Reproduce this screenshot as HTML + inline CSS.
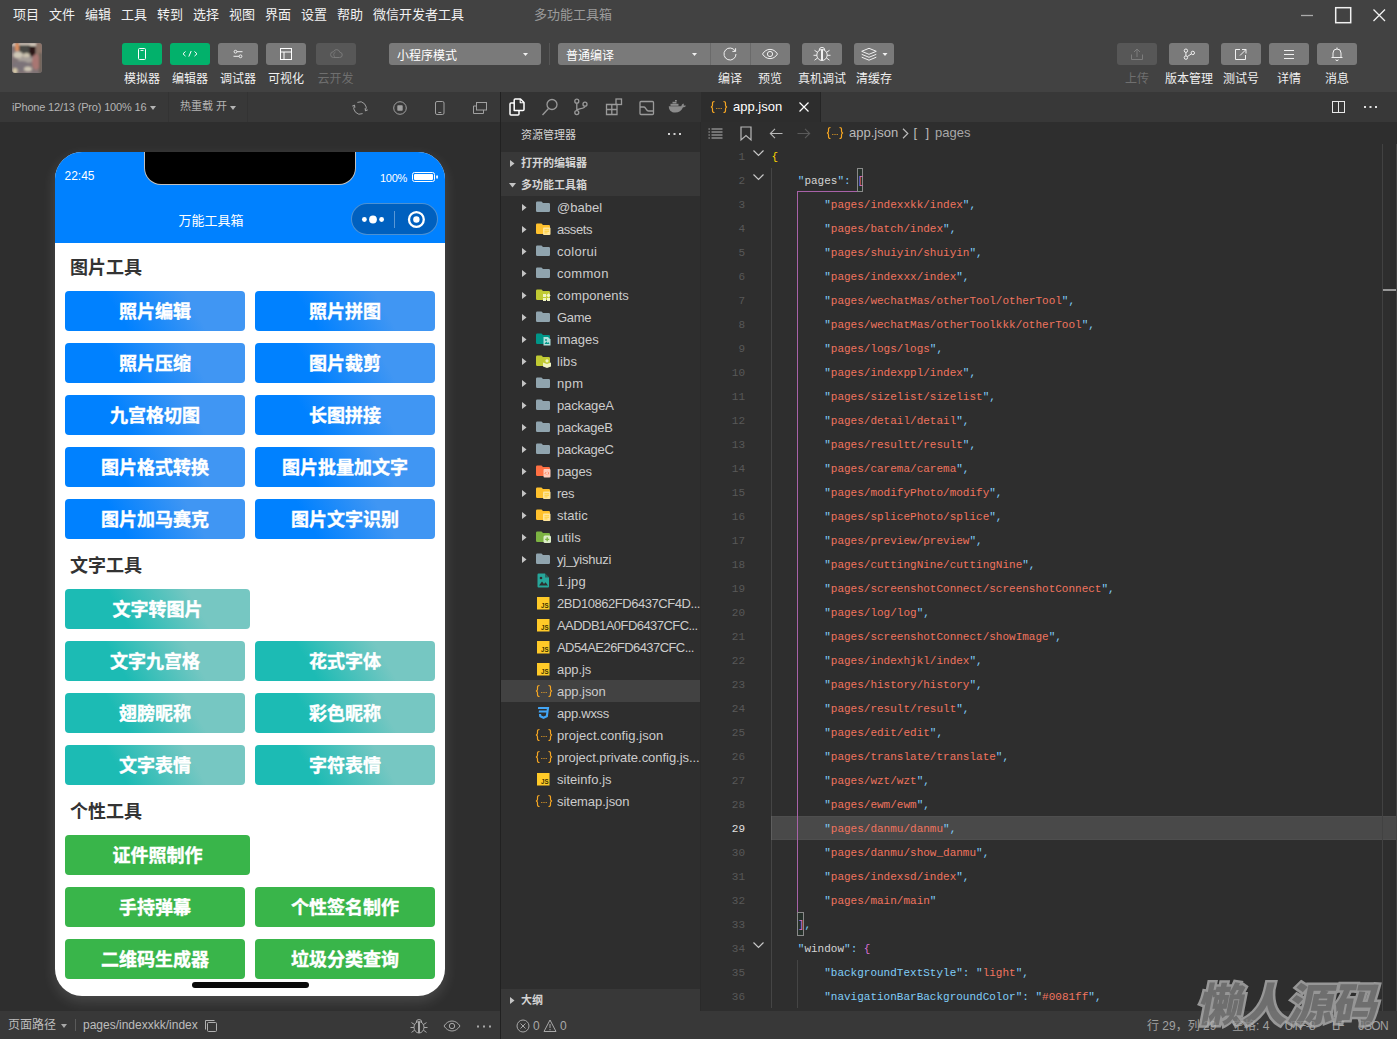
<!DOCTYPE html>
<html lang="zh-CN"><head><meta charset="utf-8"><title>微信开发者工具</title><style>
*{box-sizing:border-box;margin:0;padding:0}
html,body{width:1397px;height:1039px;overflow:hidden;background:#2e2e2e}
body{position:relative;font-family:"Liberation Sans","Noto Sans CJK SC",sans-serif;font-size:12px;color:#ccc;-webkit-font-smoothing:antialiased}
.abs{position:absolute}
.t{position:absolute;white-space:nowrap;line-height:1}
svg{position:absolute;overflow:visible}
#top{position:absolute;left:0;top:0;width:1397px;height:92px;background:#424242}
.mi{position:absolute;top:0;height:30px;line-height:30px;font-size:13px;color:#f2f2f2;white-space:nowrap}
.tb{position:absolute;top:43px;height:22px;width:40px;border-radius:3px;background:#7a7a7a}
.tb.g{background:#02b16b}
.tb.d{background:#575757}
.tl{position:absolute;top:72px;height:14px;line-height:14px;font-size:12px;color:#f0f0f0;white-space:nowrap;transform:translateX(-50%)}
.tl.d{color:#6f6f6f}
#simbar{position:absolute;left:0;top:92px;width:500px;height:30px;background:#383838}
#actbar{position:absolute;left:501px;top:92px;width:200px;height:30px;background:#333}
#tabbar{position:absolute;left:700px;top:92px;width:697px;height:30px;background:#383838}
#vdiv{position:absolute;left:500px;top:92px;width:1px;height:947px;background:#212121}
#sim{position:absolute;left:0;top:122px;width:500px;height:889px;background:#2e2e2e}
#simfoot{position:absolute;left:0;top:1011px;width:500px;height:28px;background:#383838}
#expl{position:absolute;left:501px;top:122px;width:199px;height:889px;background:#2e2e2e}
#status{position:absolute;left:501px;top:1011px;width:896px;height:28px;background:#383838}
#editor{position:absolute;left:700px;top:122px;width:697px;height:889px;background:#2e2e2e}

.ln{position:absolute;left:0;width:45px;height:24px;line-height:26px;text-align:right;font-family:"Liberation Mono",monospace;font-size:11px}
.cl{position:absolute;left:71.4px;height:24px;line-height:26px;white-space:pre;font-family:"Liberation Mono",monospace;font-size:11px;color:#d4d4d4}
#wm{position:absolute;left:1194px;top:969px;font-family:"Noto Sans CJK SC",sans-serif;font-weight:900;font-size:45px;line-height:66px;color:#7e7e7e;-webkit-text-stroke:5px #b0b0b0;paint-order:stroke fill;white-space:nowrap;letter-spacing:0;transform:skewX(-11deg);transform-origin:left bottom;opacity:.8}
</style></head>
<body>
<div id="top">
<span class="mi" style="left:13px">项目</span>
<span class="mi" style="left:49px">文件</span>
<span class="mi" style="left:85px">编辑</span>
<span class="mi" style="left:121px">工具</span>
<span class="mi" style="left:157px">转到</span>
<span class="mi" style="left:193px">选择</span>
<span class="mi" style="left:229px">视图</span>
<span class="mi" style="left:265px">界面</span>
<span class="mi" style="left:301px">设置</span>
<span class="mi" style="left:337px">帮助</span>
<span class="mi" style="left:373px">微信开发者工具</span>
<span class="mi" style="left:534px;color:#9b9b9b">多功能工具箱</span>
<svg style="left:1295px;top:0" width="102" height="30" viewBox="0 0 102 30" fill="none" stroke="#f0f0f0" stroke-width="1.3"><path d="M6 15.5h12" stroke="#aaa"/><rect x="40.7" y="7.7" width="15" height="15" stroke-width="1.5"/><path d="M78.5 9.5l11.5 11.5M90 9.5L78.5 21"/></svg>
<svg style="left:12px;top:43px" width="30" height="30" viewBox="0 0 30 30"><defs><clipPath id="avc"><rect width="30" height="30" rx="3"/></clipPath><filter id="avb" x="-20%" y="-20%" width="140%" height="140%"><feGaussianBlur stdDeviation="1"/></filter></defs><g clip-path="url(#avc)"><rect width="30" height="30" fill="#7f7375"/><g filter="url(#avb)"><rect x="0" y="0" width="30" height="3" fill="#d9cfc0"/><rect x="3" y="0" width="4" height="8" fill="#d98e5e"/><rect x="7" y="2" width="11" height="9" fill="#4a4a44"/><rect x="17.5" y="3" width="6" height="10" fill="#2a1418"/><rect x="24" y="0" width="6" height="14" fill="#8e7468"/><ellipse cx="6" cy="12" rx="5" ry="3.5" fill="#cfc7b6"/><ellipse cx="14.5" cy="12.5" rx="3.5" ry="2.5" fill="#cdc4b0"/><ellipse cx="14" cy="17" rx="8" ry="3" fill="#a8a09a"/><ellipse cx="24" cy="19" rx="4" ry="8" fill="#a97672"/><ellipse cx="9" cy="23" rx="9" ry="5" fill="#7c7379"/><ellipse cx="16" cy="26" rx="4" ry="2.5" fill="#cfc6b4"/><ellipse cx="3" cy="28" rx="2.5" ry="3" fill="#d5c9a8"/><rect x="27" y="10" width="3" height="20" fill="#6d6258"/></g></g></svg>
<div class="tb g" style="left:122px;width:40px;"><svg width="40" height="22" viewBox="0 0 40 22" fill="none" stroke="#fff" stroke-width="1"><rect x="16.5" y="5.5" width="7" height="11" rx="1"/><path d="M18.5 7.5h3" stroke-width="0.9"/></svg></div>
<div class="tb g" style="left:170px;width:40px;"><svg width="40" height="22" viewBox="0 0 40 22" fill="none" stroke="#fff" stroke-width="1"><path d="M15.5 8.5l-2.5 2.3 2.5 2.3M24.5 8.5l2.5 2.3-2.5 2.3M21.2 8l-2.4 5.6"/></svg></div>
<div class="tb " style="left:218px;width:40px;"><svg width="40" height="22" viewBox="0 0 40 22" fill="none" stroke="#f0f0f0" stroke-width="1"><circle cx="17.5" cy="8.7" r="1.4"/><path d="M19 8.7h5.5M15.5 13.3h5.5"/><circle cx="22.5" cy="13.3" r="1.4"/></svg></div>
<div class="tb " style="left:266px;width:40px;"><svg width="40" height="22" viewBox="0 0 40 22" fill="none" stroke="#fff" stroke-width="1"><rect x="14.5" y="5.5" width="11" height="11"/><path d="M14.5 9h11M18 9v7.5"/></svg></div>
<div class="tb d" style="left:316px;width:40px;"><svg width="40" height="22" viewBox="0 0 40 22" fill="none" stroke="#7a7a7a" stroke-width="1"><path d="M17.5 14.5h6a2.6 2.6 0 0 0 0.3-5.2 3.3 3.3 0 0 0-6.3-0.6 2.9 2.9 0 0 0 0 5.8z"/><path d="M19.5 14.5a3 3 0 0 1 0-5.5" stroke-width="0.8"/></svg></div>
<span class="tl " style="left:142px">模拟器</span>
<span class="tl " style="left:190px">编辑器</span>
<span class="tl " style="left:238px">调试器</span>
<span class="tl " style="left:286px">可视化</span>
<span class="tl d" style="left:335.5px">云开发</span>
<div class="tb" style="left:389px;width:152px"><span class="t" style="left:8px;top:6.5px;font-size:12px;color:#fff">小程序模式</span><svg style="left:134px;top:9.5px" width="5" height="3" viewBox="0 0 5 3"><path d="M0 0h5L2.5 3z" fill="#f0f0f0"/></svg></div>
<div class="abs" style="left:549px;top:43px;width:1px;height:22px;background:#555"></div>
<div class="tb" style="left:558px;width:232px"><span class="t" style="left:8px;top:6.5px;font-size:12px;color:#fff">普通编译</span><svg style="left:134px;top:9.5px" width="5" height="3" viewBox="0 0 5 3"><path d="M0 0h5L2.5 3z" fill="#f0f0f0"/></svg><div class="abs" style="left:152px;top:0;width:1px;height:22px;background:#6a6a6a"></div><div class="abs" style="left:192px;top:0;width:1px;height:22px;background:#6a6a6a"></div><div class="abs" style="left:152px;top:0;width:40px;height:22px"><svg width="40" height="22" viewBox="0 0 40 22" fill="none" stroke="#f0f0f0" stroke-width="1"><path d="M25.3 8.2a6 6 0 1 0 0.7 2.8"/><path d="M22.4 8.4h3.2v-3.2"/></svg></div><div class="abs" style="left:192px;top:0;width:40px;height:22px"><svg width="40" height="22" viewBox="0 0 40 22" fill="none" stroke="#f0f0f0" stroke-width="1"><path d="M12.5 11c2-3.2 4.6-4.6 7.5-4.6s5.5 1.4 7.5 4.6c-2 3.2-4.6 4.6-7.5 4.6s-5.5-1.4-7.5-4.6z"/><circle cx="20" cy="11" r="2.6"/></svg></div></div>
<div class="tb " style="left:802px;width:40px;"><svg width="40" height="22" viewBox="0 0 40 22" fill="none" stroke="#f0f0f0" stroke-width="1"><ellipse cx="20" cy="12" rx="5.2" ry="5.5"/><path d="M19.5 6.7v10.8M20.5 6.7v10.8M17.2 7.2a2.8 2.8 0 0 1 5.6 0M15.5 9.3l-3-2M24.5 9.3l3-2M14.8 12.3h-3.3M25.2 12.3h3.3M15.5 15l-3 2.2M24.5 15l3 2.2"/></svg></div>
<div class="tb " style="left:854px;width:40px;"><svg width="40" height="22" viewBox="0 0 40 22" fill="none" stroke="#f0f0f0" stroke-width="1" stroke-linejoin="round"><path d="M15 5.3l7.3 3-7.3 3-7.3-3z"/><path d="M7.7 11.3l7.3 3 7.3-3M7.7 14.2l7.3 3 7.3-3"/><path d="M28.5 10h5l-2.5 3z" fill="#f0f0f0" stroke="none"/></svg></div>
<span class="tl" style="left:730px">编译</span>
<span class="tl" style="left:770px">预览</span>
<span class="tl" style="left:822px">真机调试</span>
<span class="tl" style="left:874px">清缓存</span>
<div class="tb d" style="left:1117px;width:40px;"><svg width="40" height="22" viewBox="0 0 40 22" fill="none" stroke="#7c7c7c" stroke-width="1"><path d="M14.5 11.5v5h11v-5M20 14V6M17 9l3-3 3 3"/></svg></div>
<div class="tb " style="left:1169px;width:40px;"><svg width="40" height="22" viewBox="0 0 40 22" fill="none" stroke="#f0f0f0" stroke-width="1"><circle cx="16.9" cy="7.7" r="1.7"/><circle cx="16.9" cy="14.6" r="1.7"/><circle cx="23.8" cy="9.9" r="1.7"/><path d="M16.9 9.4v3.5M18.3 13.6l4.1-2.7"/></svg></div>
<div class="tb " style="left:1221px;width:40px;"><svg width="40" height="22" viewBox="0 0 40 22" fill="none" stroke="#f0f0f0" stroke-width="1"><path d="M19 6.5h-4.5v10h10v-4.5M21 6.5h4v4M25 6.5l-6 6"/></svg></div>
<div class="tb " style="left:1269px;width:40px;"><svg width="40" height="22" viewBox="0 0 40 22" fill="none" stroke="#f0f0f0" stroke-width="1"><path d="M15 7.5h10M15 11.5h10M15 15.5h10"/></svg></div>
<div class="tb " style="left:1317px;width:40px;"><svg width="40" height="22" viewBox="0 0 40 22" fill="none" stroke="#f0f0f0" stroke-width="1"><path d="M14.5 14.5h11M16 14.5v-4.5a4 4 0 0 1 8 0v4.5M20 6v-1.5M18.8 16.5a1.2 1.2 0 0 0 2.4 0"/></svg></div>
<span class="tl d" style="left:1137px">上传</span>
<span class="tl " style="left:1189px">版本管理</span>
<span class="tl " style="left:1241px">测试号</span>
<span class="tl " style="left:1289px">详情</span>
<span class="tl " style="left:1337px">消息</span>
</div>
<div id="simbar">
<span class="t" style="left:12px;top:9.5px;font-size:11px;color:#b4b4b4;letter-spacing:-.17px">iPhone 12/13 (Pro) 100% 16</span>
<svg style="left:150px;top:14px" width="6" height="4" viewBox="0 0 6 4"><path d="M0 0h6L3 4z" fill="#b4b4b4"/></svg>
<div class="abs" style="left:168px;top:0;width:1px;height:30px;background:#333"></div>
<span class="t" style="left:180px;top:9px;font-size:11px;color:#b4b4b4">热重载 开</span>
<svg style="left:230px;top:14px" width="6" height="4" viewBox="0 0 6 4"><path d="M0 0h6L3 4z" fill="#b4b4b4"/></svg>
<div class="abs" style="left:247px;top:0;width:1px;height:30px;background:#333"></div>
<svg style="left:352px;top:8px" width="16" height="16" viewBox="0 0 16 16" fill="none" stroke="#a0a0a0" stroke-width="1"><path d="M5.38 2.38A6.2 6.2 0 0 1 13.47 10.91M10.62 13.62A6.2 6.2 0 0 1 2.53 5.09"/><path d="M15.85 9.85L13.47 10.91L13.02 8.35M0.15 6.15L2.53 5.09L2.98 7.65" stroke-width="0.9"/></svg>
<svg style="left:392px;top:8px" width="16" height="16" viewBox="0 0 16 16" fill="none" stroke="#a0a0a0" stroke-width="1"><circle cx="8" cy="8" r="6.3"/><rect x="5.3" y="5.3" width="5.4" height="5.4" rx="0.8" fill="#a0a0a0" stroke="none"/></svg>
<svg style="left:432px;top:8px" width="16" height="16" viewBox="0 0 16 16" fill="none" stroke="#a0a0a0" stroke-width="1"><rect x="3.5" y="1.5" width="8.5" height="13" rx="1.5"/><path d="M6.3 12.5h3"/></svg>
<svg style="left:472px;top:8px" width="16" height="16" viewBox="0 0 16 16" fill="none" stroke="#a0a0a0" stroke-width="1"><rect x="4.5" y="2.5" width="10" height="7.5"/><path d="M4.5 6h-3v7.5h10v-3.5"/></svg>
</div>
<div id="sim">
<div id="phone" style="position:absolute;left:55px;top:30px;width:390px;height:844px;border-radius:27px;background:#fff;overflow:hidden;box-shadow:0 5px 14px rgba(255,255,255,.14)">
<div class="abs" style="left:0;top:0;width:390px;height:91px;background:#0081ff"></div>
<div class="abs" style="left:89px;top:-2px;width:212px;height:34.5px;background:#000;border-radius:0 0 17px 17px;border:1px solid rgba(255,255,255,.75);border-top:none"></div>
<span class="t" style="left:9.5px;top:18px;font-size:12px;color:#fff">22:45</span>
<span class="t" style="left:325px;top:20.5px;font-size:11px;color:#fff;letter-spacing:-.3px">100%</span>
<svg style="left:357px;top:20px" width="27" height="10" viewBox="0 0 27 10"><rect x="0.5" y="0.5" width="22" height="9" rx="2" fill="none" stroke="#fff" stroke-width="1"/><rect x="2" y="2" width="19" height="6" rx="1" fill="#fff"/><rect x="24.2" y="3.3" width="1.7" height="3.4" rx="0.85" fill="#fff"/></svg>
<span class="t" style="left:0;width:312px;text-align:center;top:62px;font-size:13px;color:#fff">万能工具箱</span>
<div class="abs" style="left:296px;top:51px;width:87px;height:32px;border-radius:16px;background:rgba(0,0,0,.25);border:1px solid rgba(255,255,255,.3)"></div>
<svg style="left:296px;top:51px" width="87" height="32" viewBox="0 0 87 32"><circle cx="13.4" cy="16.5" r="2.4" fill="#fff"/><circle cx="22" cy="16.5" r="3.9" fill="#fff"/><circle cx="30.6" cy="16.5" r="2.4" fill="#fff"/><path d="M43.5 8v17" stroke="rgba(255,255,255,.35)" stroke-width="1"/><circle cx="65.4" cy="16.5" r="7.4" fill="none" stroke="#fff" stroke-width="2.3"/><circle cx="65.4" cy="16.5" r="3.2" fill="#fff"/></svg>
<span class="t" style="left:15px;top:104px;height:24px;line-height:24px;font-size:18px;font-weight:bold;color:#333">图片工具</span>
<div class="abs" style="left:10px;top:139px;width:180px;height:40px;border-radius:4px;background:linear-gradient(60deg,#0081ff 31%,#4096f3 70%);color:#fff;font-size:18px;font-weight:bold;text-align:center;line-height:43px;white-space:nowrap;-webkit-text-stroke:.4px #fff">照片编辑</div>
<div class="abs" style="left:200px;top:139px;width:180px;height:40px;border-radius:4px;background:linear-gradient(60deg,#0081ff 31%,#4096f3 70%);color:#fff;font-size:18px;font-weight:bold;text-align:center;line-height:43px;white-space:nowrap;-webkit-text-stroke:.4px #fff">照片拼图</div>
<div class="abs" style="left:10px;top:191px;width:180px;height:40px;border-radius:4px;background:linear-gradient(60deg,#0081ff 31%,#4096f3 70%);color:#fff;font-size:18px;font-weight:bold;text-align:center;line-height:43px;white-space:nowrap;-webkit-text-stroke:.4px #fff">照片压缩</div>
<div class="abs" style="left:200px;top:191px;width:180px;height:40px;border-radius:4px;background:linear-gradient(60deg,#0081ff 31%,#4096f3 70%);color:#fff;font-size:18px;font-weight:bold;text-align:center;line-height:43px;white-space:nowrap;-webkit-text-stroke:.4px #fff">图片裁剪</div>
<div class="abs" style="left:10px;top:243px;width:180px;height:40px;border-radius:4px;background:linear-gradient(60deg,#0081ff 31%,#4096f3 70%);color:#fff;font-size:18px;font-weight:bold;text-align:center;line-height:43px;white-space:nowrap;-webkit-text-stroke:.4px #fff">九宫格切图</div>
<div class="abs" style="left:200px;top:243px;width:180px;height:40px;border-radius:4px;background:linear-gradient(60deg,#0081ff 31%,#4096f3 70%);color:#fff;font-size:18px;font-weight:bold;text-align:center;line-height:43px;white-space:nowrap;-webkit-text-stroke:.4px #fff">长图拼接</div>
<div class="abs" style="left:10px;top:295px;width:180px;height:40px;border-radius:4px;background:linear-gradient(60deg,#0081ff 31%,#4096f3 70%);color:#fff;font-size:18px;font-weight:bold;text-align:center;line-height:43px;white-space:nowrap;-webkit-text-stroke:.4px #fff">图片格式转换</div>
<div class="abs" style="left:200px;top:295px;width:180px;height:40px;border-radius:4px;background:linear-gradient(60deg,#0081ff 31%,#4096f3 70%);color:#fff;font-size:18px;font-weight:bold;text-align:center;line-height:43px;white-space:nowrap;-webkit-text-stroke:.4px #fff">图片批量加文字</div>
<div class="abs" style="left:10px;top:347px;width:180px;height:40px;border-radius:4px;background:linear-gradient(60deg,#0081ff 31%,#4096f3 70%);color:#fff;font-size:18px;font-weight:bold;text-align:center;line-height:43px;white-space:nowrap;-webkit-text-stroke:.4px #fff">图片加马赛克</div>
<div class="abs" style="left:200px;top:347px;width:180px;height:40px;border-radius:4px;background:linear-gradient(60deg,#0081ff 31%,#4096f3 70%);color:#fff;font-size:18px;font-weight:bold;text-align:center;line-height:43px;white-space:nowrap;-webkit-text-stroke:.4px #fff">图片文字识别</div>
<span class="t" style="left:15px;top:402px;height:24px;line-height:24px;font-size:18px;font-weight:bold;color:#333">文字工具</span>
<div class="abs" style="left:10px;top:437px;width:185px;height:40px;border-radius:4px;background:linear-gradient(60deg,#1cbbb4 31%,#76c7c2 70%);color:#fff;font-size:18px;font-weight:bold;text-align:center;line-height:43px;white-space:nowrap;-webkit-text-stroke:.4px #fff">文字转图片</div>
<div class="abs" style="left:10px;top:489px;width:180px;height:40px;border-radius:4px;background:linear-gradient(60deg,#1cbbb4 31%,#76c7c2 70%);color:#fff;font-size:18px;font-weight:bold;text-align:center;line-height:43px;white-space:nowrap;-webkit-text-stroke:.4px #fff">文字九宫格</div>
<div class="abs" style="left:200px;top:489px;width:180px;height:40px;border-radius:4px;background:linear-gradient(60deg,#1cbbb4 31%,#76c7c2 70%);color:#fff;font-size:18px;font-weight:bold;text-align:center;line-height:43px;white-space:nowrap;-webkit-text-stroke:.4px #fff">花式字体</div>
<div class="abs" style="left:10px;top:541px;width:180px;height:40px;border-radius:4px;background:linear-gradient(60deg,#1cbbb4 31%,#76c7c2 70%);color:#fff;font-size:18px;font-weight:bold;text-align:center;line-height:43px;white-space:nowrap;-webkit-text-stroke:.4px #fff">翅膀昵称</div>
<div class="abs" style="left:200px;top:541px;width:180px;height:40px;border-radius:4px;background:linear-gradient(60deg,#1cbbb4 31%,#76c7c2 70%);color:#fff;font-size:18px;font-weight:bold;text-align:center;line-height:43px;white-space:nowrap;-webkit-text-stroke:.4px #fff">彩色昵称</div>
<div class="abs" style="left:10px;top:593px;width:180px;height:40px;border-radius:4px;background:linear-gradient(60deg,#1cbbb4 31%,#76c7c2 70%);color:#fff;font-size:18px;font-weight:bold;text-align:center;line-height:43px;white-space:nowrap;-webkit-text-stroke:.4px #fff">文字表情</div>
<div class="abs" style="left:200px;top:593px;width:180px;height:40px;border-radius:4px;background:linear-gradient(60deg,#1cbbb4 31%,#76c7c2 70%);color:#fff;font-size:18px;font-weight:bold;text-align:center;line-height:43px;white-space:nowrap;-webkit-text-stroke:.4px #fff">字符表情</div>
<span class="t" style="left:15px;top:648px;height:24px;line-height:24px;font-size:18px;font-weight:bold;color:#333">个性工具</span>
<div class="abs" style="left:10px;top:683px;width:185px;height:40px;border-radius:4px;background:#39b54a;color:#fff;font-size:18px;font-weight:bold;text-align:center;line-height:43px;white-space:nowrap;-webkit-text-stroke:.4px #fff">证件照制作</div>
<div class="abs" style="left:10px;top:735px;width:180px;height:40px;border-radius:4px;background:#39b54a;color:#fff;font-size:18px;font-weight:bold;text-align:center;line-height:43px;white-space:nowrap;-webkit-text-stroke:.4px #fff">手持弹幕</div>
<div class="abs" style="left:200px;top:735px;width:180px;height:40px;border-radius:4px;background:#39b54a;color:#fff;font-size:18px;font-weight:bold;text-align:center;line-height:43px;white-space:nowrap;-webkit-text-stroke:.4px #fff">个性签名制作</div>
<div class="abs" style="left:10px;top:787px;width:180px;height:40px;border-radius:4px;background:#39b54a;color:#fff;font-size:18px;font-weight:bold;text-align:center;line-height:43px;white-space:nowrap;-webkit-text-stroke:.4px #fff">二维码生成器</div>
<div class="abs" style="left:200px;top:787px;width:180px;height:40px;border-radius:4px;background:#39b54a;color:#fff;font-size:18px;font-weight:bold;text-align:center;line-height:43px;white-space:nowrap;-webkit-text-stroke:.4px #fff">垃圾分类查询</div>
<div class="abs" style="left:137px;top:830px;width:117px;height:5.5px;border-radius:3px;background:#0a0a0a"></div>
</div>
</div>
<div id="simfoot">
<span class="t" style="left:8px;top:8px;font-size:12px;color:#bdbdbd">页面路径</span>
<svg style="left:61px;top:13px" width="6" height="4" viewBox="0 0 6 4"><path d="M0 0h6L3 4z" fill="#a8a8a8"/></svg>
<div class="abs" style="left:75px;top:8px;width:1px;height:12px;background:#5a5a5a"></div>
<span class="t" style="left:83px;top:8px;font-size:12px;color:#bdbdbd">pages/indexxkk/index</span>
<svg style="left:204px;top:8px" width="14" height="13" viewBox="0 0 14 13" fill="none" stroke="#b0b0b0" stroke-width="1"><path d="M1.5 10.5v-9h9"/><rect x="3.5" y="3.5" width="9" height="9" rx="1"/></svg>
<svg style="left:409px;top:6px" width="20" height="18" viewBox="0 0 20 18" fill="none" stroke="#a8a8a8" stroke-width="1"><ellipse cx="10" cy="10.3" rx="5" ry="5.7"/><path d="M9.5 4.8v11.2M10.5 4.8v11.2M7.2 5.3a2.8 2.8 0 0 1 5.6 0M5.6 7.6l-3.1-2M14.4 7.6l3.1-2M5 10.5h-3.5M15 10.5h3.5M5.6 13.2l-3.1 2.2M14.4 13.2l3.1 2.2"/></svg>
<svg style="left:443px;top:9px" width="18" height="12" viewBox="0 0 18 12" fill="none" stroke="#a8a8a8" stroke-width="1"><path d="M1 6c2.2-3.4 5-5 8-5s5.8 1.6 8 5c-2.2 3.4-5 5-8 5s-5.8-1.6-8-5z"/><circle cx="9" cy="6" r="2.7"/></svg>
<svg style="left:477px;top:13.5px" width="15" height="3" viewBox="0 0 15 3" fill="#a8a8a8"><rect x="0" y="0.5" width="2" height="2"/><rect x="6" y="0.5" width="2" height="2"/><rect x="12" y="0.5" width="2" height="2"/></svg>
</div>
<div id="actbar">
<svg style="left:8px;top:6px" width="16" height="18" viewBox="0 0 16 18" fill="none" stroke="#fff" stroke-width="1.5" stroke-linejoin="round"><path d="M5.2 12.5v-10.5a1 1 0 0 1 1-1h5.3l3.5 3.5v7a1 1 0 0 1-1 1z" fill="#333"/><path d="M11.2 1v3.8h3.8" stroke-width="1.1"/><path d="M5 5h-3a1 1 0 0 0-1 1v10a1 1 0 0 0 1 1h7a1 1 0 0 0 1-1v-3.3"/></svg>
<svg style="left:40px;top:6px" width="18" height="18" viewBox="0 0 18 18" fill="none" stroke="#9a9a9a" stroke-width="1.3"><circle cx="11" cy="6.5" r="5"/><path d="M7.5 10.5l-6 6.5"/></svg>
<svg style="left:72px;top:6px" width="16" height="18" viewBox="0 0 16 18" fill="none" stroke="#9a9a9a" stroke-width="1.3"><circle cx="3.8" cy="3.2" r="2"/><circle cx="3.8" cy="14.6" r="2"/><circle cx="12" cy="6.2" r="2"/><path d="M3.8 5.2v7.4M12 8.2c0 3-8 2-8.2 4.4"/></svg>
<svg style="left:104px;top:6px" width="18" height="18" viewBox="0 0 18 18" fill="none" stroke="#9a9a9a" stroke-width="1.3"><path d="M1.5 6.5h10.5v10h-10.5zM6.8 6.5v10M1.5 11.5h10.5"/><rect x="11" y="1" width="5.5" height="5.5"/></svg>
<svg style="left:138px;top:8px" width="16" height="16" viewBox="0 0 16 16" fill="none" stroke="#9a9a9a" stroke-width="1.3"><rect x="1" y="1.5" width="13.5" height="13" rx="1"/><path d="M1 7h4c2 0 2 4 4.5 4h5"/></svg>
<svg style="left:167px;top:8px" width="18" height="13" viewBox="0 0 18 13" fill="#8c8c8c"><path d="M0.8 6.2h12.5c0.4-1.6 1.6-2.3 2.2-2.6c0.3 0.6 0.5 1.4 0.3 2.1c0.8-0.3 1.6-0.2 2.1 0c-0.5 1-1.6 1.5-2.9 1.5c-1.3 3.4-4.2 5.3-7.8 5.3c-4 0-6.3-2.3-6.4-6.3z"/><rect x="2.5" y="3.8" width="8" height="2"/><rect x="4.5" y="1.8" width="4" height="1.7"/><rect x="7" y="0" width="1.8" height="1.5"/></svg>
</div>
<div id="expl">
<span class="t" style="left:20px;top:8px;font-size:11px;color:#d4d4d4">资源管理器</span>
<svg style="left:167px;top:11px" width="14" height="3" viewBox="0 0 14 3" fill="#d0d0d0"><rect x="0" y="0" width="2" height="2"/><rect x="5.5" y="0" width="2" height="2"/><rect x="11" y="0" width="2" height="2"/></svg>
<div class="abs" style="left:0;top:30px;width:199px;height:44px;background:#383838"></div>
<svg style="left:9px;top:37.5px" width="5" height="7" viewBox="0 0 5 7"><path d="M0 0l4.5 3.5L0 7z" fill="#c4c4c4"/></svg>
<span class="t" style="left:20px;top:36px;font-size:11px;font-weight:bold;color:#d4d4d4">打开的编辑器</span>
<svg style="left:7.5px;top:61px" width="7" height="5" viewBox="0 0 7 5"><path d="M0 0h7L3.5 4.5z" fill="#c4c4c4"/></svg>
<span class="t" style="left:20px;top:58px;font-size:11px;font-weight:bold;color:#d4d4d4">多功能工具箱</span>
<div class="abs" style="left:0;top:74px;width:199px;height:22px;">
<svg style="left:21.3px;top:7.5px" width="5" height="7" viewBox="0 0 5 7"><path d="M0 0l4.5 3.5L0 7z" fill="#c4c4c4"/></svg>
<svg width="16" height="14" viewBox="0 0 16 14" style="left:35px;top:4px"><path d="M1.2 1.5h4.3l1.5 1.5h5.8a1.2 1.2 0 0 1 1.2 1.2v6.6a1.2 1.2 0 0 1-1.2 1.2h-11.6a1.2 1.2 0 0 1-1.2-1.2v-8.1a1.2 1.2 0 0 1 1.2-1.2z" fill="#90a4ae"/></svg>
<span class="t" style="left:56px;top:3.5px;height:16px;line-height:16px;font-size:13px;color:#ccc;letter-spacing:0.031px">@babel</span></div>
<div class="abs" style="left:0;top:96px;width:199px;height:22px;">
<svg style="left:21.3px;top:7.5px" width="5" height="7" viewBox="0 0 5 7"><path d="M0 0l4.5 3.5L0 7z" fill="#c4c4c4"/></svg>
<svg width="16" height="14" viewBox="0 0 16 14" style="left:35px;top:4px"><path d="M1.2 1.5h4.3l1.5 1.5h5.8a1.2 1.2 0 0 1 1.2 1.2v6.6a1.2 1.2 0 0 1-1.2 1.2h-11.6a1.2 1.2 0 0 1-1.2-1.2v-8.1a1.2 1.2 0 0 1 1.2-1.2z" fill="#ffc12d"/><rect x="7" y="5.5" width="7.5" height="7.5" rx="1" fill="#ffe59a"/><path d="M8.5 7.7h4.5M8.5 9.3h4.5M8.5 10.9h3" stroke="#ffca28" stroke-width="0.8"/></svg>
<span class="t" style="left:56px;top:3.5px;height:16px;line-height:16px;font-size:13px;color:#ccc;letter-spacing:-0.43px">assets</span></div>
<div class="abs" style="left:0;top:118px;width:199px;height:22px;">
<svg style="left:21.3px;top:7.5px" width="5" height="7" viewBox="0 0 5 7"><path d="M0 0l4.5 3.5L0 7z" fill="#c4c4c4"/></svg>
<svg width="16" height="14" viewBox="0 0 16 14" style="left:35px;top:4px"><path d="M1.2 1.5h4.3l1.5 1.5h5.8a1.2 1.2 0 0 1 1.2 1.2v6.6a1.2 1.2 0 0 1-1.2 1.2h-11.6a1.2 1.2 0 0 1-1.2-1.2v-8.1a1.2 1.2 0 0 1 1.2-1.2z" fill="#90a4ae"/></svg>
<span class="t" style="left:56px;top:3.5px;height:16px;line-height:16px;font-size:13px;color:#ccc;letter-spacing:0.258px">colorui</span></div>
<div class="abs" style="left:0;top:140px;width:199px;height:22px;">
<svg style="left:21.3px;top:7.5px" width="5" height="7" viewBox="0 0 5 7"><path d="M0 0l4.5 3.5L0 7z" fill="#c4c4c4"/></svg>
<svg width="16" height="14" viewBox="0 0 16 14" style="left:35px;top:4px"><path d="M1.2 1.5h4.3l1.5 1.5h5.8a1.2 1.2 0 0 1 1.2 1.2v6.6a1.2 1.2 0 0 1-1.2 1.2h-11.6a1.2 1.2 0 0 1-1.2-1.2v-8.1a1.2 1.2 0 0 1 1.2-1.2z" fill="#90a4ae"/></svg>
<span class="t" style="left:56px;top:3.5px;height:16px;line-height:16px;font-size:13px;color:#ccc;letter-spacing:0.307px">common</span></div>
<div class="abs" style="left:0;top:162px;width:199px;height:22px;">
<svg style="left:21.3px;top:7.5px" width="5" height="7" viewBox="0 0 5 7"><path d="M0 0l4.5 3.5L0 7z" fill="#c4c4c4"/></svg>
<svg width="16" height="14" viewBox="0 0 16 14" style="left:35px;top:4px"><path d="M1.2 1.5h4.3l1.5 1.5h5.8a1.2 1.2 0 0 1 1.2 1.2v6.6a1.2 1.2 0 0 1-1.2 1.2h-11.6a1.2 1.2 0 0 1-1.2-1.2v-8.1a1.2 1.2 0 0 1 1.2-1.2z" fill="#c0ca33"/><rect x="7" y="6" width="3" height="3" fill="#f0f4c3"/><rect x="7" y="10" width="3" height="3" fill="#f0f4c3"/><rect x="11" y="10" width="3" height="3" fill="#f0f4c3"/><path d="M12.5 5.2l2.2 2.2-2.2 2.2-2.2-2.2z" fill="#f0f4c3"/></svg>
<span class="t" style="left:56px;top:3.5px;height:16px;line-height:16px;font-size:13px;color:#ccc;letter-spacing:0.117px">components</span></div>
<div class="abs" style="left:0;top:184px;width:199px;height:22px;">
<svg style="left:21.3px;top:7.5px" width="5" height="7" viewBox="0 0 5 7"><path d="M0 0l4.5 3.5L0 7z" fill="#c4c4c4"/></svg>
<svg width="16" height="14" viewBox="0 0 16 14" style="left:35px;top:4px"><path d="M1.2 1.5h4.3l1.5 1.5h5.8a1.2 1.2 0 0 1 1.2 1.2v6.6a1.2 1.2 0 0 1-1.2 1.2h-11.6a1.2 1.2 0 0 1-1.2-1.2v-8.1a1.2 1.2 0 0 1 1.2-1.2z" fill="#90a4ae"/></svg>
<span class="t" style="left:56px;top:3.5px;height:16px;line-height:16px;font-size:13px;color:#ccc;letter-spacing:-0.327px">Game</span></div>
<div class="abs" style="left:0;top:206px;width:199px;height:22px;">
<svg style="left:21.3px;top:7.5px" width="5" height="7" viewBox="0 0 5 7"><path d="M0 0l4.5 3.5L0 7z" fill="#c4c4c4"/></svg>
<svg width="16" height="14" viewBox="0 0 16 14" style="left:35px;top:4px"><path d="M1.2 1.5h4.3l1.5 1.5h5.8a1.2 1.2 0 0 1 1.2 1.2v6.6a1.2 1.2 0 0 1-1.2 1.2h-11.6a1.2 1.2 0 0 1-1.2-1.2v-8.1a1.2 1.2 0 0 1 1.2-1.2z" fill="#009688"/><path d="M7.5 5h4.5l2.5 2.5v6h-7z" fill="#b2dfdb"/><path d="M8.5 12l1.8-2.5 1.2 1.5 0.8-1 1.2 2z" fill="#009688"/><circle cx="10" cy="8" r="0.9" fill="#009688"/></svg>
<span class="t" style="left:56px;top:3.5px;height:16px;line-height:16px;font-size:13px;color:#ccc;letter-spacing:-0.054px">images</span></div>
<div class="abs" style="left:0;top:228px;width:199px;height:22px;">
<svg style="left:21.3px;top:7.5px" width="5" height="7" viewBox="0 0 5 7"><path d="M0 0l4.5 3.5L0 7z" fill="#c4c4c4"/></svg>
<svg width="16" height="14" viewBox="0 0 16 14" style="left:35px;top:4px"><path d="M1.2 1.5h4.3l1.5 1.5h5.8a1.2 1.2 0 0 1 1.2 1.2v6.6a1.2 1.2 0 0 1-1.2 1.2h-11.6a1.2 1.2 0 0 1-1.2-1.2v-8.1a1.2 1.2 0 0 1 1.2-1.2z" fill="#c0ca33"/><path d="M7 8.5l4 1.5 4-1.5v4l-4 1.5-4-1.5z" fill="#f0f4c3"/><circle cx="11" cy="6.8" r="1.6" fill="#f0f4c3"/></svg>
<span class="t" style="left:56px;top:3.5px;height:16px;line-height:16px;font-size:13px;color:#ccc;letter-spacing:0.146px">libs</span></div>
<div class="abs" style="left:0;top:250px;width:199px;height:22px;">
<svg style="left:21.3px;top:7.5px" width="5" height="7" viewBox="0 0 5 7"><path d="M0 0l4.5 3.5L0 7z" fill="#c4c4c4"/></svg>
<svg width="16" height="14" viewBox="0 0 16 14" style="left:35px;top:4px"><path d="M1.2 1.5h4.3l1.5 1.5h5.8a1.2 1.2 0 0 1 1.2 1.2v6.6a1.2 1.2 0 0 1-1.2 1.2h-11.6a1.2 1.2 0 0 1-1.2-1.2v-8.1a1.2 1.2 0 0 1 1.2-1.2z" fill="#90a4ae"/></svg>
<span class="t" style="left:56px;top:3.5px;height:16px;line-height:16px;font-size:13px;color:#ccc;letter-spacing:0.368px">npm</span></div>
<div class="abs" style="left:0;top:272px;width:199px;height:22px;">
<svg style="left:21.3px;top:7.5px" width="5" height="7" viewBox="0 0 5 7"><path d="M0 0l4.5 3.5L0 7z" fill="#c4c4c4"/></svg>
<svg width="16" height="14" viewBox="0 0 16 14" style="left:35px;top:4px"><path d="M1.2 1.5h4.3l1.5 1.5h5.8a1.2 1.2 0 0 1 1.2 1.2v6.6a1.2 1.2 0 0 1-1.2 1.2h-11.6a1.2 1.2 0 0 1-1.2-1.2v-8.1a1.2 1.2 0 0 1 1.2-1.2z" fill="#90a4ae"/></svg>
<span class="t" style="left:56px;top:3.5px;height:16px;line-height:16px;font-size:13px;color:#ccc;letter-spacing:-0.129px">packageA</span></div>
<div class="abs" style="left:0;top:294px;width:199px;height:22px;">
<svg style="left:21.3px;top:7.5px" width="5" height="7" viewBox="0 0 5 7"><path d="M0 0l4.5 3.5L0 7z" fill="#c4c4c4"/></svg>
<svg width="16" height="14" viewBox="0 0 16 14" style="left:35px;top:4px"><path d="M1.2 1.5h4.3l1.5 1.5h5.8a1.2 1.2 0 0 1 1.2 1.2v6.6a1.2 1.2 0 0 1-1.2 1.2h-11.6a1.2 1.2 0 0 1-1.2-1.2v-8.1a1.2 1.2 0 0 1 1.2-1.2z" fill="#90a4ae"/></svg>
<span class="t" style="left:56px;top:3.5px;height:16px;line-height:16px;font-size:13px;color:#ccc;letter-spacing:-0.279px">packageB</span></div>
<div class="abs" style="left:0;top:316px;width:199px;height:22px;">
<svg style="left:21.3px;top:7.5px" width="5" height="7" viewBox="0 0 5 7"><path d="M0 0l4.5 3.5L0 7z" fill="#c4c4c4"/></svg>
<svg width="16" height="14" viewBox="0 0 16 14" style="left:35px;top:4px"><path d="M1.2 1.5h4.3l1.5 1.5h5.8a1.2 1.2 0 0 1 1.2 1.2v6.6a1.2 1.2 0 0 1-1.2 1.2h-11.6a1.2 1.2 0 0 1-1.2-1.2v-8.1a1.2 1.2 0 0 1 1.2-1.2z" fill="#90a4ae"/></svg>
<span class="t" style="left:56px;top:3.5px;height:16px;line-height:16px;font-size:13px;color:#ccc;letter-spacing:-0.218px">packageC</span></div>
<div class="abs" style="left:0;top:338px;width:199px;height:22px;">
<svg style="left:21.3px;top:7.5px" width="5" height="7" viewBox="0 0 5 7"><path d="M0 0l4.5 3.5L0 7z" fill="#c4c4c4"/></svg>
<svg width="16" height="14" viewBox="0 0 16 14" style="left:35px;top:4px"><path d="M1.2 1.5h4.3l1.5 1.5h5.8a1.2 1.2 0 0 1 1.2 1.2v6.6a1.2 1.2 0 0 1-1.2 1.2h-11.6a1.2 1.2 0 0 1-1.2-1.2v-8.1a1.2 1.2 0 0 1 1.2-1.2z" fill="#ff7043"/><rect x="7.5" y="5" width="7" height="8.5" rx="1" fill="#ffccbc"/><path d="M10.3 8l-1.3 1.3 1.3 1.3M11.7 8l1.3 1.3-1.3 1.3" stroke="#ff7043" stroke-width="0.8" fill="none"/></svg>
<span class="t" style="left:56px;top:3.5px;height:16px;line-height:16px;font-size:13px;color:#ccc;letter-spacing:-0.084px">pages</span></div>
<div class="abs" style="left:0;top:360px;width:199px;height:22px;">
<svg style="left:21.3px;top:7.5px" width="5" height="7" viewBox="0 0 5 7"><path d="M0 0l4.5 3.5L0 7z" fill="#c4c4c4"/></svg>
<svg width="16" height="14" viewBox="0 0 16 14" style="left:35px;top:4px"><path d="M1.2 1.5h4.3l1.5 1.5h5.8a1.2 1.2 0 0 1 1.2 1.2v6.6a1.2 1.2 0 0 1-1.2 1.2h-11.6a1.2 1.2 0 0 1-1.2-1.2v-8.1a1.2 1.2 0 0 1 1.2-1.2z" fill="#ffc12d"/><rect x="7" y="5.5" width="7.5" height="7.5" rx="1" fill="#ffe59a"/><path d="M8.5 7.7h4.5M8.5 9.3h4.5M8.5 10.9h3" stroke="#ffca28" stroke-width="0.8"/></svg>
<span class="t" style="left:56px;top:3.5px;height:16px;line-height:16px;font-size:13px;color:#ccc;letter-spacing:-0.221px">res</span></div>
<div class="abs" style="left:0;top:382px;width:199px;height:22px;">
<svg style="left:21.3px;top:7.5px" width="5" height="7" viewBox="0 0 5 7"><path d="M0 0l4.5 3.5L0 7z" fill="#c4c4c4"/></svg>
<svg width="16" height="14" viewBox="0 0 16 14" style="left:35px;top:4px"><path d="M1.2 1.5h4.3l1.5 1.5h5.8a1.2 1.2 0 0 1 1.2 1.2v6.6a1.2 1.2 0 0 1-1.2 1.2h-11.6a1.2 1.2 0 0 1-1.2-1.2v-8.1a1.2 1.2 0 0 1 1.2-1.2z" fill="#ffc12d"/><rect x="7" y="5.5" width="7.5" height="7.5" rx="1" fill="#ffe59a"/><path d="M8.5 7.7h4.5M8.5 9.3h4.5M8.5 10.9h3" stroke="#ffca28" stroke-width="0.8"/></svg>
<span class="t" style="left:56px;top:3.5px;height:16px;line-height:16px;font-size:13px;color:#ccc;letter-spacing:0.076px">static</span></div>
<div class="abs" style="left:0;top:404px;width:199px;height:22px;">
<svg style="left:21.3px;top:7.5px" width="5" height="7" viewBox="0 0 5 7"><path d="M0 0l4.5 3.5L0 7z" fill="#c4c4c4"/></svg>
<svg width="16" height="14" viewBox="0 0 16 14" style="left:35px;top:4px"><path d="M1.2 1.5h4.3l1.5 1.5h5.8a1.2 1.2 0 0 1 1.2 1.2v6.6a1.2 1.2 0 0 1-1.2 1.2h-11.6a1.2 1.2 0 0 1-1.2-1.2v-8.1a1.2 1.2 0 0 1 1.2-1.2z" fill="#7cb342"/><rect x="7.5" y="5.5" width="7.5" height="7.5" rx="1.5" fill="#dcedc8"/><path d="M11.2 7.3v4M9.2 9.3h4" stroke="#7cb342" stroke-width="1.3"/></svg>
<span class="t" style="left:56px;top:3.5px;height:16px;line-height:16px;font-size:13px;color:#ccc;letter-spacing:0.175px">utils</span></div>
<div class="abs" style="left:0;top:426px;width:199px;height:22px;">
<svg style="left:21.3px;top:7.5px" width="5" height="7" viewBox="0 0 5 7"><path d="M0 0l4.5 3.5L0 7z" fill="#c4c4c4"/></svg>
<svg width="16" height="14" viewBox="0 0 16 14" style="left:35px;top:4px"><path d="M1.2 1.5h4.3l1.5 1.5h5.8a1.2 1.2 0 0 1 1.2 1.2v6.6a1.2 1.2 0 0 1-1.2 1.2h-11.6a1.2 1.2 0 0 1-1.2-1.2v-8.1a1.2 1.2 0 0 1 1.2-1.2z" fill="#90a4ae"/></svg>
<span class="t" style="left:56px;top:3.5px;height:16px;line-height:16px;font-size:13px;color:#ccc;letter-spacing:-0.226px">yj_yishuzi</span></div>
<div class="abs" style="left:0;top:448px;width:199px;height:22px;">
<svg width="13" height="15" viewBox="0 0 13 15" style="left:36px;top:3px"><path d="M1.5 0.5h6.5l4 4v9a1 1 0 0 1-1 1h-9.5a1 1 0 0 1-1-1v-12a1 1 0 0 1 1-1z" fill="#26a69a"/><path d="M8 0.5v4h4" fill="#2e2e2e" opacity="0.55"/><path d="M2 12.5l3-4 2 2.5 1.5-1.8 2.5 3.3z" fill="#2e2e2e"/><circle cx="4" cy="5" r="1.3" fill="#2e2e2e"/></svg>
<span class="t" style="left:56px;top:3.5px;height:16px;line-height:16px;font-size:13px;color:#ccc;letter-spacing:0.119px">1.jpg</span></div>
<div class="abs" style="left:0;top:470px;width:199px;height:22px;">
<svg width="13" height="13" viewBox="0 0 13 13" style="left:36px;top:5px"><rect width="12.5" height="12.5" fill="#ffca28"/><text x="4" y="11.3" font-family="Liberation Sans,sans-serif" font-size="6.5" font-weight="bold" fill="#3a3200" textLength="7.5" lengthAdjust="spacingAndGlyphs">JS</text></svg>
<span class="t" style="left:56px;top:3.5px;height:16px;line-height:16px;font-size:13px;color:#ccc;letter-spacing:-0.452px">2BD10862FD6437CF4D...</span></div>
<div class="abs" style="left:0;top:492px;width:199px;height:22px;">
<svg width="13" height="13" viewBox="0 0 13 13" style="left:36px;top:5px"><rect width="12.5" height="12.5" fill="#ffca28"/><text x="4" y="11.3" font-family="Liberation Sans,sans-serif" font-size="6.5" font-weight="bold" fill="#3a3200" textLength="7.5" lengthAdjust="spacingAndGlyphs">JS</text></svg>
<span class="t" style="left:56px;top:3.5px;height:16px;line-height:16px;font-size:13px;color:#ccc;letter-spacing:-0.552px">AADDB1A0FD6437CFC...</span></div>
<div class="abs" style="left:0;top:514px;width:199px;height:22px;">
<svg width="13" height="13" viewBox="0 0 13 13" style="left:36px;top:5px"><rect width="12.5" height="12.5" fill="#ffca28"/><text x="4" y="11.3" font-family="Liberation Sans,sans-serif" font-size="6.5" font-weight="bold" fill="#3a3200" textLength="7.5" lengthAdjust="spacingAndGlyphs">JS</text></svg>
<span class="t" style="left:56px;top:3.5px;height:16px;line-height:16px;font-size:13px;color:#ccc;letter-spacing:-0.566px">AD54AE26FD6437CFC...</span></div>
<div class="abs" style="left:0;top:536px;width:199px;height:22px;">
<svg width="13" height="13" viewBox="0 0 13 13" style="left:36px;top:5px"><rect width="12.5" height="12.5" fill="#ffca28"/><text x="4" y="11.3" font-family="Liberation Sans,sans-serif" font-size="6.5" font-weight="bold" fill="#3a3200" textLength="7.5" lengthAdjust="spacingAndGlyphs">JS</text></svg>
<span class="t" style="left:56px;top:3.5px;height:16px;line-height:16px;font-size:13px;color:#ccc;letter-spacing:-0.101px">app.js</span></div>
<div class="abs" style="left:0;top:558px;width:199px;height:22px;background:#424242;">
<svg width="18" height="14" viewBox="0 0 18 14" style="left:34px;top:4px" fill="none" stroke="#f5a623" stroke-width="1.2"><path d="M4.5 1.5c-1.5 0-2 0.5-2 1.8v2c0 0.9-0.5 1.5-1.5 1.7c1 0.2 1.5 0.8 1.5 1.7v2c0 1.3 0.5 1.8 2 1.8M13.5 1.5c1.5 0 2 0.5 2 1.8v2c0 0.9 0.5 1.5 1.5 1.7c-1 0.2-1.5 0.8-1.5 1.7v2c0 1.3-0.5 1.8-2 1.8"/><path d="M6.3 8.5h1M8.5 8.5h1M10.7 8.5h1" stroke-width="1.1"/></svg>
<span class="t" style="left:56px;top:3.5px;height:16px;line-height:16px;font-size:13px;color:#ccc;letter-spacing:-0.057px">app.json</span></div>
<div class="abs" style="left:0;top:580px;width:199px;height:22px;">
<svg width="14" height="14" viewBox="0 0 14 14" style="left:35px;top:4px"><path d="M2.2 1h11l-1.4 10-4.3 2-4.2-2-0.4-3h2.2l0.2 1.5 2.3 1 2.3-1 0.4-3h-7.6l0.3-2h7.6l0.2-1.5h-8.9z" fill="#42a5f5"/></svg>
<span class="t" style="left:56px;top:3.5px;height:16px;line-height:16px;font-size:13px;color:#ccc;letter-spacing:-0.263px">app.wxss</span></div>
<div class="abs" style="left:0;top:602px;width:199px;height:22px;">
<svg width="18" height="14" viewBox="0 0 18 14" style="left:34px;top:4px" fill="none" stroke="#f5a623" stroke-width="1.2"><path d="M4.5 1.5c-1.5 0-2 0.5-2 1.8v2c0 0.9-0.5 1.5-1.5 1.7c1 0.2 1.5 0.8 1.5 1.7v2c0 1.3 0.5 1.8 2 1.8M13.5 1.5c1.5 0 2 0.5 2 1.8v2c0 0.9 0.5 1.5 1.5 1.7c-1 0.2-1.5 0.8-1.5 1.7v2c0 1.3-0.5 1.8-2 1.8"/><path d="M6.3 8.5h1M8.5 8.5h1M10.7 8.5h1" stroke-width="1.1"/></svg>
<span class="t" style="left:56px;top:3.5px;height:16px;line-height:16px;font-size:13px;color:#ccc;letter-spacing:0.085px">project.config.json</span></div>
<div class="abs" style="left:0;top:624px;width:199px;height:22px;">
<svg width="18" height="14" viewBox="0 0 18 14" style="left:34px;top:4px" fill="none" stroke="#f5a623" stroke-width="1.2"><path d="M4.5 1.5c-1.5 0-2 0.5-2 1.8v2c0 0.9-0.5 1.5-1.5 1.7c1 0.2 1.5 0.8 1.5 1.7v2c0 1.3 0.5 1.8 2 1.8M13.5 1.5c1.5 0 2 0.5 2 1.8v2c0 0.9 0.5 1.5 1.5 1.7c-1 0.2-1.5 0.8-1.5 1.7v2c0 1.3-0.5 1.8-2 1.8"/><path d="M6.3 8.5h1M8.5 8.5h1M10.7 8.5h1" stroke-width="1.1"/></svg>
<span class="t" style="left:56px;top:3.5px;height:16px;line-height:16px;font-size:13px;color:#ccc;letter-spacing:-0.039px">project.private.config.js...</span></div>
<div class="abs" style="left:0;top:646px;width:199px;height:22px;">
<svg width="13" height="13" viewBox="0 0 13 13" style="left:36px;top:5px"><rect width="12.5" height="12.5" fill="#ffca28"/><text x="4" y="11.3" font-family="Liberation Sans,sans-serif" font-size="6.5" font-weight="bold" fill="#3a3200" textLength="7.5" lengthAdjust="spacingAndGlyphs">JS</text></svg>
<span class="t" style="left:56px;top:3.5px;height:16px;line-height:16px;font-size:13px;color:#ccc;letter-spacing:0.036px">siteinfo.js</span></div>
<div class="abs" style="left:0;top:668px;width:199px;height:22px;">
<svg width="18" height="14" viewBox="0 0 18 14" style="left:34px;top:4px" fill="none" stroke="#f5a623" stroke-width="1.2"><path d="M4.5 1.5c-1.5 0-2 0.5-2 1.8v2c0 0.9-0.5 1.5-1.5 1.7c1 0.2 1.5 0.8 1.5 1.7v2c0 1.3 0.5 1.8 2 1.8M13.5 1.5c1.5 0 2 0.5 2 1.8v2c0 0.9 0.5 1.5 1.5 1.7c-1 0.2-1.5 0.8-1.5 1.7v2c0 1.3-0.5 1.8-2 1.8"/><path d="M6.3 8.5h1M8.5 8.5h1M10.7 8.5h1" stroke-width="1.1"/></svg>
<span class="t" style="left:56px;top:3.5px;height:16px;line-height:16px;font-size:13px;color:#ccc;letter-spacing:-0.04px">sitemap.json</span></div>
<div class="abs" style="left:0;top:867px;width:199px;height:22px;background:#383838"></div>
<svg style="left:8.5px;top:874.5px" width="5" height="7" viewBox="0 0 5 7"><path d="M0 0l4.5 3.5L0 7z" fill="#c4c4c4"/></svg>
<span class="t" style="left:20px;top:873px;font-size:11px;font-weight:bold;color:#d4d4d4">大纲</span>
</div>
<div id="tabbar">
<div class="abs" style="left:0;top:0;width:1px;height:30px;background:#333"></div>
<div class="abs" style="left:1px;top:0;width:120px;height:30px;background:#2d2d2d;border-right:1px solid #252525"></div>
<svg width="18" height="14" viewBox="0 0 18 14" style="left:10px;top:8px" fill="none" stroke="#f5a623" stroke-width="1.2"><path d="M4.5 1.5c-1.5 0-2 0.5-2 1.8v2c0 0.9-0.5 1.5-1.5 1.7c1 0.2 1.5 0.8 1.5 1.7v2c0 1.3 0.5 1.8 2 1.8M13.5 1.5c1.5 0 2 0.5 2 1.8v2c0 0.9 0.5 1.5 1.5 1.7c-1 0.2-1.5 0.8-1.5 1.7v2c0 1.3-0.5 1.8-2 1.8"/><path d="M6.3 8.5h1M8.5 8.5h1M10.7 8.5h1" stroke-width="1.1"/></svg>
<span class="t" style="left:33px;top:7px;height:16px;line-height:16px;font-size:13px;color:#fff">app.json</span>
<svg style="left:99px;top:10px" width="10" height="10" viewBox="0 0 10 10" stroke="#fff" stroke-width="1.2"><path d="M0.5 0.5l9 9M9.5 0.5l-9 9"/></svg>
<svg style="left:632px;top:9px" width="13" height="12" viewBox="0 0 13 12" fill="none" stroke="#e8e8e8" stroke-width="1"><rect x="0.5" y="0.5" width="12" height="11"/><path d="M6.5 0.5v11"/></svg>
<svg style="left:664px;top:14px" width="14" height="3" viewBox="0 0 14 3" fill="#e0e0e0"><rect x="0" y="0" width="2" height="2"/><rect x="5.5" y="0" width="2" height="2"/><rect x="11" y="0" width="2" height="2"/></svg>
</div>
<div id="editor">
<div class="abs" style="left:0;top:0;width:1px;height:889px;background:#2a2a2a"></div>
<svg style="left:8px;top:6px" width="15" height="11" viewBox="0 0 15 11" fill="none" stroke="#b8b8b8" stroke-width="1"><path d="M0.5 1h1.3M3.5 1h11M0.5 4h1.3M3.5 4h11M0.5 7h1.3M3.5 7h11M0.5 10h1.3M3.5 10h11"/></svg>
<svg style="left:40px;top:4px" width="12" height="15" viewBox="0 0 12 15" fill="none" stroke="#b8b8b8" stroke-width="1.2"><path d="M1 1h10v13l-5-4.5-5 4.5z"/></svg>
<svg style="left:69px;top:6px" width="14" height="11" viewBox="0 0 14 11" fill="none" stroke="#b8b8b8" stroke-width="1.1"><path d="M13.5 5.5h-12M6 0.8l-4.7 4.7 4.7 4.7"/></svg>
<svg style="left:97px;top:6px" width="14" height="11" viewBox="0 0 14 11" fill="none" stroke="#5a5a5a" stroke-width="1.1"><path d="M0.5 5.5h12M8 0.8l4.7 4.7-4.7 4.7"/></svg>
<svg width="18" height="14" viewBox="0 0 18 14" style="left:126px;top:4px" fill="none" stroke="#f5a623" stroke-width="1.2"><path d="M4.5 1.5c-1.5 0-2 0.5-2 1.8v2c0 0.9-0.5 1.5-1.5 1.7c1 0.2 1.5 0.8 1.5 1.7v2c0 1.3 0.5 1.8 2 1.8M13.5 1.5c1.5 0 2 0.5 2 1.8v2c0 0.9 0.5 1.5 1.5 1.7c-1 0.2-1.5 0.8-1.5 1.7v2c0 1.3-0.5 1.8-2 1.8"/><path d="M6.3 8.5h1M8.5 8.5h1M10.7 8.5h1" stroke-width="1.1"/></svg>
<span class="t" style="left:149px;top:3px;height:16px;line-height:16px;font-size:13px;color:#bbb">app.json</span>
<svg style="left:202px;top:6px" width="7" height="11" viewBox="0 0 7 11" fill="none" stroke="#bbb" stroke-width="1.2"><path d="M1 0.8l4.8 4.7-4.8 4.7"/></svg>
<span class="t" style="left:213.5px;top:2.5px;height:16px;line-height:16px;font-size:13px;color:#bbb">[</span><span class="t" style="left:225.5px;top:2.5px;height:16px;line-height:16px;font-size:13px;color:#bbb">]</span>
<span class="t" style="left:235px;top:3px;height:16px;line-height:16px;font-size:13px;color:#a8a8a8">pages</span>
<div class="abs" style="left:71px;top:694px;width:626px;height:24px;background:#494949;border-top:1px solid #4e4e4e;border-bottom:1px solid #4e4e4e"></div>
<div class="abs" style="left:71px;top:46px;width:1px;height:840px;background:#454545"></div><div class="abs" style="left:71px;top:694px;width:1px;height:24px;background:#5e5e5e"></div>
<div class="abs" style="left:97px;top:838px;width:1px;height:48px;background:#454545"></div>
<div class="abs" style="left:97px;top:69px;width:1px;height:721px;background:#a862a8"></div>
<div class="abs" style="left:97px;top:69px;width:66px;height:1px;background:#a862a8"></div>
<div class="abs" style="left:157px;top:46px;width:6px;height:24px;background:#26302a;border:1px solid #8a8a8a"></div>
<div class="abs" style="left:97px;top:790px;width:7px;height:24px;background:#26302a;border:1px solid #8a8a8a"></div>
<div class="ln" style="top:22px;color:#585858">1</div>
<div class="cl" style="top:22px"><span style="color:#ffd700">{</span></div>
<div class="ln" style="top:46px;color:#585858">2</div>
<div class="cl" style="top:46px">    <span style="color:#80cdf8">&quot;</span><span style="color:#d4d4d4">pages</span><span style="color:#80cdf8">&quot;</span><span style="color:#80cdf8">:</span> <span style="color:#da70d6">[</span></div>
<div class="ln" style="top:70px;color:#585858">3</div>
<div class="cl" style="top:70px">        <span style="color:#80cdf8">&quot;</span><span style="color:#f0745f">pages/indexxkk/index</span><span style="color:#80cdf8">&quot;</span><span style="color:#80cdf8">,</span></div>
<div class="ln" style="top:94px;color:#585858">4</div>
<div class="cl" style="top:94px">        <span style="color:#80cdf8">&quot;</span><span style="color:#f0745f">pages/batch/index</span><span style="color:#80cdf8">&quot;</span><span style="color:#80cdf8">,</span></div>
<div class="ln" style="top:118px;color:#585858">5</div>
<div class="cl" style="top:118px">        <span style="color:#80cdf8">&quot;</span><span style="color:#f0745f">pages/shuiyin/shuiyin</span><span style="color:#80cdf8">&quot;</span><span style="color:#80cdf8">,</span></div>
<div class="ln" style="top:142px;color:#585858">6</div>
<div class="cl" style="top:142px">        <span style="color:#80cdf8">&quot;</span><span style="color:#f0745f">pages/indexxx/index</span><span style="color:#80cdf8">&quot;</span><span style="color:#80cdf8">,</span></div>
<div class="ln" style="top:166px;color:#585858">7</div>
<div class="cl" style="top:166px">        <span style="color:#80cdf8">&quot;</span><span style="color:#f0745f">pages/wechatMas/otherTool/otherTool</span><span style="color:#80cdf8">&quot;</span><span style="color:#80cdf8">,</span></div>
<div class="ln" style="top:190px;color:#585858">8</div>
<div class="cl" style="top:190px">        <span style="color:#80cdf8">&quot;</span><span style="color:#f0745f">pages/wechatMas/otherToolkkk/otherTool</span><span style="color:#80cdf8">&quot;</span><span style="color:#80cdf8">,</span></div>
<div class="ln" style="top:214px;color:#585858">9</div>
<div class="cl" style="top:214px">        <span style="color:#80cdf8">&quot;</span><span style="color:#f0745f">pages/logs/logs</span><span style="color:#80cdf8">&quot;</span><span style="color:#80cdf8">,</span></div>
<div class="ln" style="top:238px;color:#585858">10</div>
<div class="cl" style="top:238px">        <span style="color:#80cdf8">&quot;</span><span style="color:#f0745f">pages/indexppl/index</span><span style="color:#80cdf8">&quot;</span><span style="color:#80cdf8">,</span></div>
<div class="ln" style="top:262px;color:#585858">11</div>
<div class="cl" style="top:262px">        <span style="color:#80cdf8">&quot;</span><span style="color:#f0745f">pages/sizelist/sizelist</span><span style="color:#80cdf8">&quot;</span><span style="color:#80cdf8">,</span></div>
<div class="ln" style="top:286px;color:#585858">12</div>
<div class="cl" style="top:286px">        <span style="color:#80cdf8">&quot;</span><span style="color:#f0745f">pages/detail/detail</span><span style="color:#80cdf8">&quot;</span><span style="color:#80cdf8">,</span></div>
<div class="ln" style="top:310px;color:#585858">13</div>
<div class="cl" style="top:310px">        <span style="color:#80cdf8">&quot;</span><span style="color:#f0745f">pages/resultt/result</span><span style="color:#80cdf8">&quot;</span><span style="color:#80cdf8">,</span></div>
<div class="ln" style="top:334px;color:#585858">14</div>
<div class="cl" style="top:334px">        <span style="color:#80cdf8">&quot;</span><span style="color:#f0745f">pages/carema/carema</span><span style="color:#80cdf8">&quot;</span><span style="color:#80cdf8">,</span></div>
<div class="ln" style="top:358px;color:#585858">15</div>
<div class="cl" style="top:358px">        <span style="color:#80cdf8">&quot;</span><span style="color:#f0745f">pages/modifyPhoto/modify</span><span style="color:#80cdf8">&quot;</span><span style="color:#80cdf8">,</span></div>
<div class="ln" style="top:382px;color:#585858">16</div>
<div class="cl" style="top:382px">        <span style="color:#80cdf8">&quot;</span><span style="color:#f0745f">pages/splicePhoto/splice</span><span style="color:#80cdf8">&quot;</span><span style="color:#80cdf8">,</span></div>
<div class="ln" style="top:406px;color:#585858">17</div>
<div class="cl" style="top:406px">        <span style="color:#80cdf8">&quot;</span><span style="color:#f0745f">pages/preview/preview</span><span style="color:#80cdf8">&quot;</span><span style="color:#80cdf8">,</span></div>
<div class="ln" style="top:430px;color:#585858">18</div>
<div class="cl" style="top:430px">        <span style="color:#80cdf8">&quot;</span><span style="color:#f0745f">pages/cuttingNine/cuttingNine</span><span style="color:#80cdf8">&quot;</span><span style="color:#80cdf8">,</span></div>
<div class="ln" style="top:454px;color:#585858">19</div>
<div class="cl" style="top:454px">        <span style="color:#80cdf8">&quot;</span><span style="color:#f0745f">pages/screenshotConnect/screenshotConnect</span><span style="color:#80cdf8">&quot;</span><span style="color:#80cdf8">,</span></div>
<div class="ln" style="top:478px;color:#585858">20</div>
<div class="cl" style="top:478px">        <span style="color:#80cdf8">&quot;</span><span style="color:#f0745f">pages/log/log</span><span style="color:#80cdf8">&quot;</span><span style="color:#80cdf8">,</span></div>
<div class="ln" style="top:502px;color:#585858">21</div>
<div class="cl" style="top:502px">        <span style="color:#80cdf8">&quot;</span><span style="color:#f0745f">pages/screenshotConnect/showImage</span><span style="color:#80cdf8">&quot;</span><span style="color:#80cdf8">,</span></div>
<div class="ln" style="top:526px;color:#585858">22</div>
<div class="cl" style="top:526px">        <span style="color:#80cdf8">&quot;</span><span style="color:#f0745f">pages/indexhjkl/index</span><span style="color:#80cdf8">&quot;</span><span style="color:#80cdf8">,</span></div>
<div class="ln" style="top:550px;color:#585858">23</div>
<div class="cl" style="top:550px">        <span style="color:#80cdf8">&quot;</span><span style="color:#f0745f">pages/history/history</span><span style="color:#80cdf8">&quot;</span><span style="color:#80cdf8">,</span></div>
<div class="ln" style="top:574px;color:#585858">24</div>
<div class="cl" style="top:574px">        <span style="color:#80cdf8">&quot;</span><span style="color:#f0745f">pages/result/result</span><span style="color:#80cdf8">&quot;</span><span style="color:#80cdf8">,</span></div>
<div class="ln" style="top:598px;color:#585858">25</div>
<div class="cl" style="top:598px">        <span style="color:#80cdf8">&quot;</span><span style="color:#f0745f">pages/edit/edit</span><span style="color:#80cdf8">&quot;</span><span style="color:#80cdf8">,</span></div>
<div class="ln" style="top:622px;color:#585858">26</div>
<div class="cl" style="top:622px">        <span style="color:#80cdf8">&quot;</span><span style="color:#f0745f">pages/translate/translate</span><span style="color:#80cdf8">&quot;</span><span style="color:#80cdf8">,</span></div>
<div class="ln" style="top:646px;color:#585858">27</div>
<div class="cl" style="top:646px">        <span style="color:#80cdf8">&quot;</span><span style="color:#f0745f">pages/wzt/wzt</span><span style="color:#80cdf8">&quot;</span><span style="color:#80cdf8">,</span></div>
<div class="ln" style="top:670px;color:#585858">28</div>
<div class="cl" style="top:670px">        <span style="color:#80cdf8">&quot;</span><span style="color:#f0745f">pages/ewm/ewm</span><span style="color:#80cdf8">&quot;</span><span style="color:#80cdf8">,</span></div>
<div class="ln" style="top:694px;color:#e0e0e0">29</div>
<div class="cl" style="top:694px">        <span style="color:#80cdf8">&quot;</span><span style="color:#f0745f">pages/danmu/danmu</span><span style="color:#80cdf8">&quot;</span><span style="color:#80cdf8">,</span></div>
<div class="ln" style="top:718px;color:#585858">30</div>
<div class="cl" style="top:718px">        <span style="color:#80cdf8">&quot;</span><span style="color:#f0745f">pages/danmu/show_danmu</span><span style="color:#80cdf8">&quot;</span><span style="color:#80cdf8">,</span></div>
<div class="ln" style="top:742px;color:#585858">31</div>
<div class="cl" style="top:742px">        <span style="color:#80cdf8">&quot;</span><span style="color:#f0745f">pages/indexsd/index</span><span style="color:#80cdf8">&quot;</span><span style="color:#80cdf8">,</span></div>
<div class="ln" style="top:766px;color:#585858">32</div>
<div class="cl" style="top:766px">        <span style="color:#80cdf8">&quot;</span><span style="color:#f0745f">pages/main/main</span><span style="color:#80cdf8">&quot;</span></div>
<div class="ln" style="top:790px;color:#585858">33</div>
<div class="cl" style="top:790px">    <span style="color:#da70d6">]</span><span style="color:#80cdf8">,</span></div>
<div class="ln" style="top:814px;color:#585858">34</div>
<div class="cl" style="top:814px">    <span style="color:#80cdf8">&quot;</span><span style="color:#d4d4d4">window</span><span style="color:#80cdf8">&quot;</span><span style="color:#80cdf8">:</span> <span style="color:#da70d6">{</span></div>
<div class="ln" style="top:838px;color:#585858">35</div>
<div class="cl" style="top:838px">        <span style="color:#80cdf8">&quot;</span><span style="color:#80cdf8">backgroundTextStyle</span><span style="color:#80cdf8">&quot;</span><span style="color:#80cdf8">:</span> <span style="color:#80cdf8">&quot;</span><span style="color:#f0745f">light</span><span style="color:#80cdf8">&quot;</span><span style="color:#80cdf8">,</span></div>
<div class="ln" style="top:862px;color:#585858">36</div>
<div class="cl" style="top:862px">        <span style="color:#80cdf8">&quot;</span><span style="color:#80cdf8">navigationBarBackgroundColor</span><span style="color:#80cdf8">&quot;</span><span style="color:#80cdf8">:</span> <span style="color:#80cdf8">&quot;</span><span style="color:#f0745f">#0081ff</span><span style="color:#80cdf8">&quot;</span><span style="color:#80cdf8">,</span></div>
<svg style="left:53px;top:28px" width="11" height="6" viewBox="0 0 11 6" fill="none" stroke="#c8c8c8" stroke-width="1.2"><path d="M0.5 0.5l5 5 5-5"/></svg>
<svg style="left:53px;top:52px" width="11" height="6" viewBox="0 0 11 6" fill="none" stroke="#c8c8c8" stroke-width="1.2"><path d="M0.5 0.5l5 5 5-5"/></svg>
<svg style="left:53px;top:820px" width="11" height="6" viewBox="0 0 11 6" fill="none" stroke="#c8c8c8" stroke-width="1.2"><path d="M0.5 0.5l5 5 5-5"/></svg>
<div class="abs" style="left:682px;top:22px;width:1px;height:867px;background:#424242"></div>
<div class="abs" style="left:683px;top:167px;width:13px;height:2px;background:#999"></div><div class="abs" style="left:696px;top:22px;width:1px;height:867px;background:#444"></div>
</div>
<div id="status">
<svg style="left:15px;top:8px" width="14" height="14" viewBox="0 0 14 14" fill="none" stroke="#a8a8a8" stroke-width="1"><circle cx="7" cy="7" r="6"/><path d="M4.5 4.5l5 5M9.5 4.5l-5 5"/></svg>
<span class="t" style="left:32px;top:9px;font-size:12px;color:#a8a8a8">0</span>
<svg style="left:42px;top:8px" width="14" height="13" viewBox="0 0 14 13" fill="none" stroke="#a8a8a8" stroke-width="1"><path d="M7 1l6 11.5h-12z" stroke-linejoin="round"/><path d="M7 5v4M7 10v1.3"/></svg>
<span class="t" style="left:59px;top:9px;font-size:12px;color:#a8a8a8">0</span>
<span class="t" style="left:646px;color:#a0a0a0;font-size:12px;top:8.5px">行 29，列 29</span>
<span class="t" style="left:731px;color:#a0a0a0;font-size:12px;top:8.5px">空格: 4</span>
<span class="t" style="left:783.5px;color:#a0a0a0;font-size:12px;top:8.5px;letter-spacing:-.7px">UTF-8</span>
<span class="t" style="left:831px;color:#a0a0a0;font-size:12px;top:8.5px;letter-spacing:-1.5px">LF</span>
<span class="t" style="left:857.5px;color:#a0a0a0;font-size:12px;top:8.5px;letter-spacing:-.6px">JSON</span>
</div>
<div id="wm">懒人源码</div>
<div id="vdiv"></div>
</body></html>
